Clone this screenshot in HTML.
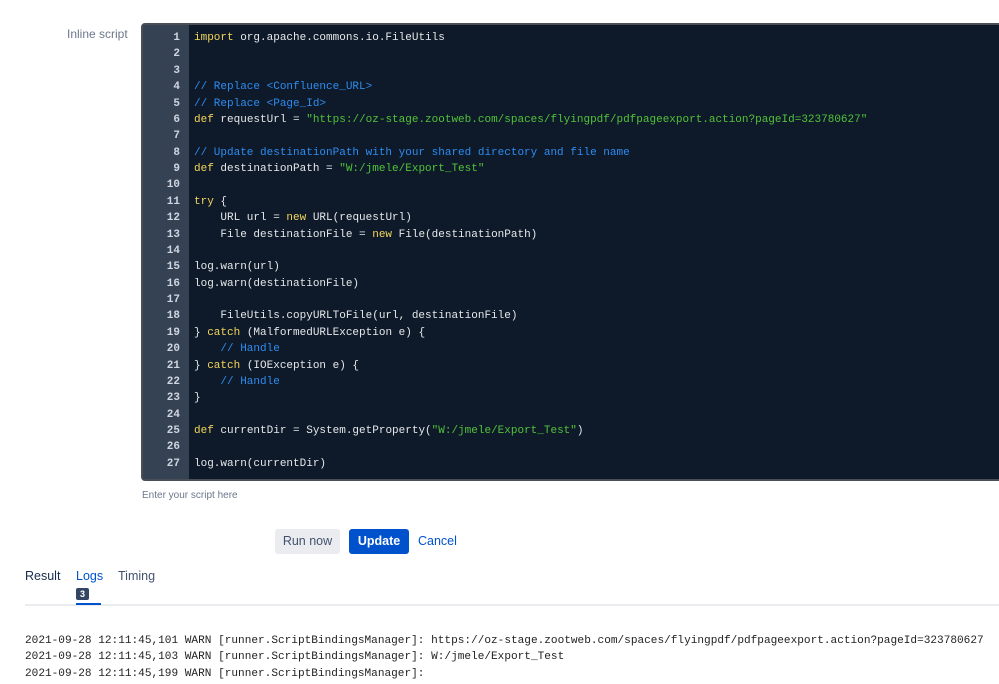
<!DOCTYPE html>
<html><head><meta charset="utf-8"><style>
body{margin:0;width:999px;height:684px;background:#fff;font-family:"Liberation Sans",sans-serif;position:relative;overflow:hidden}
.lbl{position:absolute;left:67px;top:27px;font-size:12px;color:#6b778c}
.ed{position:absolute;left:141px;top:23px;width:870px;height:458px;background:#0e1a29;border:2px solid #4a4f57;border-radius:4px;box-sizing:border-box;overflow:hidden}
.gut{position:absolute;left:0;top:0;width:46px;height:100%;background:#344254}
.ln{position:absolute;left:0;top:5px;width:37px;text-align:right;font:bold 11px/16.38px "Liberation Mono",monospace;color:#d0d6df}
.code{position:absolute;left:51px;top:5px;font:11px/16.38px "Liberation Mono",monospace;color:#e6e8ea;white-space:pre}
.k{color:#f3d55b}.c{color:#2d8cf0}.s{color:#52c23a}
.hint{position:absolute;left:142px;top:490px;font-size:10px;color:#6b778c}
.btn{position:absolute;top:529px;height:25px;line-height:25px;font-size:12.5px;border-radius:3px;text-align:center}
.tabs{position:absolute;top:569px;font-size:12.5px}
.log{position:absolute;left:25px;top:633px;font:11.1px/16.4px "Liberation Mono",monospace;color:#222;white-space:pre}
</style></head><body>
<div class="lbl">Inline script</div>
<div class="ed"><div class="gut"></div>
<div class="ln">1<br>2<br>3<br>4<br>5<br>6<br>7<br>8<br>9<br>10<br>11<br>12<br>13<br>14<br>15<br>16<br>17<br>18<br>19<br>20<br>21<br>22<br>23<br>24<br>25<br>26<br>27</div>
<div class="code"><span class="k">import</span> org.apache.commons.io.FileUtils


<span class="c">// Replace &lt;Confluence_URL&gt;</span>
<span class="c">// Replace &lt;Page_Id&gt;</span>
<span class="k">def</span> requestUrl = <span class="s">"https://oz-stage.zootweb.com/spaces/flyingpdf/pdfpageexport.action?pageId=323780627"</span>

<span class="c">// Update destinationPath with your shared directory and file name</span>
<span class="k">def</span> destinationPath = <span class="s">"W:/jmele/Export_Test"</span>

<span class="k">try</span> {
    URL url = <span class="k">new</span> URL(requestUrl)
    File destinationFile = <span class="k">new</span> File(destinationPath)

log.warn(url)
log.warn(destinationFile)

    FileUtils.copyURLToFile(url, destinationFile)
} <span class="k">catch</span> (MalformedURLException e) {
    <span class="c">// Handle</span>
} <span class="k">catch</span> (IOException e) {
    <span class="c">// Handle</span>
}

<span class="k">def</span> currentDir = System.getProperty(<span class="s">"W:/jmele/Export_Test"</span>)

log.warn(currentDir)</div></div>
<div class="hint">Enter your script here</div>
<div class="btn" style="left:275px;width:65px;background:#ebecf0;color:#42526e">Run now</div>
<div class="btn" style="left:349px;width:60px;background:#0052cc;color:#fff;font-weight:bold">Update</div>
<div class="btn" style="left:418px;width:36px;color:#0052cc">Cancel</div>
<div class="tabs" style="left:25px;color:#172b4d">Result</div>
<div class="tabs" style="left:76px;color:#0052cc">Logs</div>
<div class="tabs" style="left:118px;color:#42526e">Timing</div>
<div style="position:absolute;left:76px;top:588px;width:13px;height:12px;background:#344563;color:#fff;font-size:9px;font-weight:bold;text-align:center;line-height:12px;border-radius:2px">3</div>
<div style="position:absolute;left:25px;top:604px;width:974px;height:2px;background:#ebecf0"></div>
<div style="position:absolute;left:76px;top:603px;width:25px;height:2px;background:#0052cc"></div>
<div class="log">2021-09-28 12:11:45,101 WARN [runner.ScriptBindingsManager]: https://oz-stage.zootweb.com/spaces/flyingpdf/pdfpageexport.action?pageId=323780627
2021-09-28 12:11:45,103 WARN [runner.ScriptBindingsManager]: W:/jmele/Export_Test
2021-09-28 12:11:45,199 WARN [runner.ScriptBindingsManager]:</div>
</body></html>
